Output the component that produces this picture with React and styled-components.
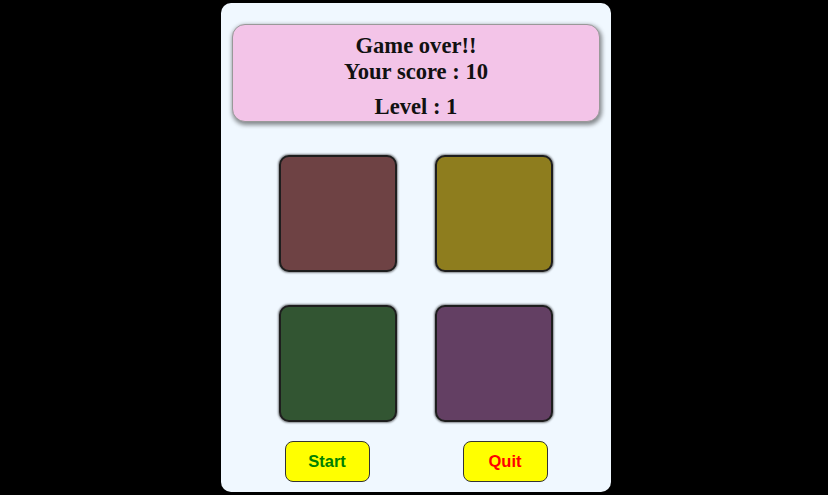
import React from "react";
import styled, { createGlobalStyle } from "styled-components";

const GlobalStyle = createGlobalStyle`
  html, body {
    margin: 0;
    padding: 0;
    background: #000;
  }
  body {
    font-family: "Liberation Serif", "Times New Roman", serif;
  }
`;

const Page = styled.div`
  display: flex;
  justify-content: center;
  padding: 3px 0 0 4px;
  height: 495px;
  box-sizing: border-box;
`;

const Card = styled.div`
  width: 390px;
  height: 489px;
  box-sizing: border-box;
  background: #f0f8ff;
  border-radius: 10px;
  padding: 21px 11px 0;
  display: flex;
  flex-direction: column;
  align-items: center;
`;

const Banner = styled.div`
  width: 100%;
  height: 98px;
  box-sizing: border-box;
  background: #f3c4e8;
  border: 1px solid #999;
  border-radius: 13px;
  box-shadow: 1px 2px 4px 1px rgba(0, 0, 0, 0.45);
  text-align: center;
  padding-top: 8px;
`;

const Line = styled.h2`
  margin: 0;
  font-size: 22.6px;
  line-height: 26px;
  font-weight: bold;
  color: #111;
`;

const LevelLine = styled(Line)`
  margin-top: 9px;
`;

const Grid = styled.div`
  display: grid;
  grid-template-columns: repeat(2, 118px);
  grid-auto-rows: 117px;
  column-gap: 38px;
  row-gap: 33px;
  margin-top: 33px;
`;

const Tile = styled.div`
  background: ${(props) => props.color};
  border: 2px solid #1e1e1e;
  border-radius: 10px;
  box-shadow: 0 0 2px 1px rgba(0, 0, 0, 0.45);
  box-sizing: border-box;
`;

const Buttons = styled.div`
  display: flex;
  gap: 93px;
  margin-top: 19px;
`;

const Button = styled.button`
  width: 85px;
  height: 41px;
  background: #ffff00;
  border: 1px solid #333;
  border-radius: 8px;
  font-family: "Liberation Sans", Arial, sans-serif;
  font-weight: bold;
  font-size: 16.5px;
  color: ${(props) => props.textColor};
  cursor: pointer;
`;

const tiles = ["#6e4244", "#8e7d1e", "#325532", "#633f63"];

export default function App() {
  return (
    <>
      <GlobalStyle />
      <Page>
        <Card>
          <Banner>
            <Line>Game over!!</Line>
            <Line>Your score : 10</Line>
            <LevelLine>Level : 1</LevelLine>
          </Banner>
          <Grid>
            {tiles.map((c) => (
              <Tile key={c} color={c} />
            ))}
          </Grid>
          <Buttons>
            <Button textColor="#008000">Start</Button>
            <Button textColor="#ff0000">Quit</Button>
          </Buttons>
        </Card>
      </Page>
    </>
  );
}
